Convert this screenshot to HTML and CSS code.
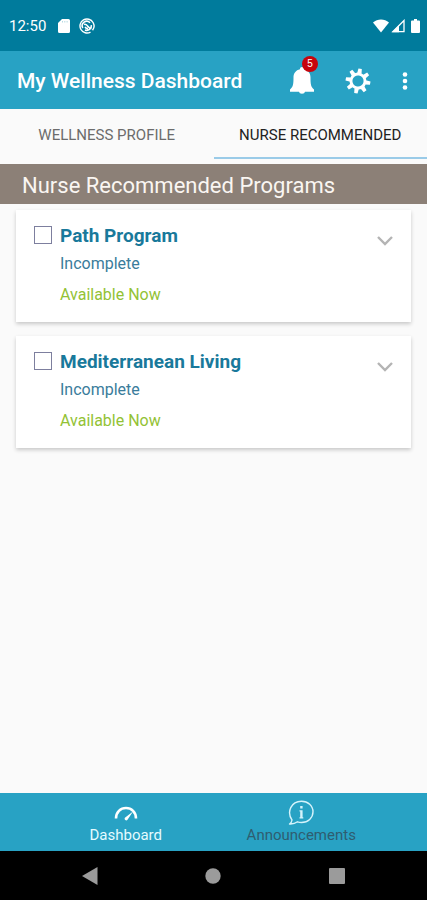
FILE: index.html
```html
<!DOCTYPE html>
<html lang="en">
<head>
<meta charset="utf-8">
<meta name="viewport" content="width=device-width, initial-scale=1">
<title>My Wellness Dashboard</title>
<link rel="stylesheet" href="styles.css">
</head>
<body>
<div class="status-bar">
  <span class="clock">12:50</span>
  <svg class="status-sd" width="12" height="14" viewBox="0 0 12 14" aria-hidden="true"><path fill="#fff" d="M4 0h6.500a1.500 1.500 0 0 1 1.500 1.500v11a1.500 1.500 0 0 1-1.500 1.500h-9A1.500 1.500 0 0 1 0 12.500V4z"/><path stroke="#b5d9e2" stroke-width="1" d="M4.500 2v1.500M6.800 2v1.500M9.100 2v1.500"/></svg>
  <svg width="16" height="16" viewBox="0 0 16 16" fill="none" stroke="#fff" aria-hidden="true"><circle cx="8" cy="8" r="7" stroke-width="1.400" stroke-dasharray="41 3" transform="rotate(60 8 8)"/><path stroke-width="1.600" d="M3.800 10A4.500 4.500 0 0 1 11 4.700M5 6.500C7 5.500 8 7 9 8.500s2 2 3.500 2M12.300 7.200A4.500 4.500 0 0 1 6 12M6 9c.8 1.200 1.500 1.600 3 1.600"/></svg>
  <div class="status-signals">
    <svg width="16" height="14" viewBox="0 0 16 14" aria-hidden="true"><path fill="#fff" d="M0 3.500C4.500-.5 11.500-.5 16 3.500L8 13.500z"/></svg>
    <svg width="14" height="14" viewBox="0 0 14 14" aria-hidden="true"><path fill="none" stroke="#fff" stroke-width="1.300" d="M1.800 12.700L13 1.500v11.200z"/><path fill="#fff" d="M1 13.300L8 6.300v7z"/></svg>
    <svg class="status-battery" width="9" height="14" viewBox="0 0 9 14" aria-hidden="true"><path fill="#fff" d="M3 0h3v1.500h2a1 1 0 0 1 1 1V13a1 1 0 0 1-1 1H1a1 1 0 0 1-1-1V2.500a1 1 0 0 1 1-1h2z"/></svg>
  </div>
</div>

<header class="app-bar">
  <h1 class="app-title">My Wellness Dashboard</h1>
  <div class="app-actions">
    <button class="icon-button" type="button" aria-label="Notifications, 5 new">
      <svg width="24" height="28" viewBox="0 0 24 28" aria-hidden="true"><path fill="#fff" d="M12 0c1.300 0 2 .9 2 2.200 4.200 1 6.500 4 6.500 8.300 0 7 .5 9.500 3.500 12v2.300H0v-2.300c3-2.500 3.500-5 3.500-12 0-4.300 2.300-7.300 6.500-8.300C10 .9 10.700 0 12 0zM8.800 24.500h6.400a3.300 3 0 0 1-6.400 0z"/></svg>
      <span class="badge">5</span>
    </button>
    <button class="icon-button" type="button" aria-label="Settings">
      <svg width="26" height="26" viewBox="-13 -13 26 26" aria-hidden="true">
        <g transform="rotate(10)">
          <circle r="7" fill="none" stroke="#fff" stroke-width="2.800"/>
          <g fill="#fff"><path id="tooth" d="M-2.200-7.500L-1.700-12.400h3.400L2.200-7.500z"/><use href="#tooth" transform="rotate(45)"/><use href="#tooth" transform="rotate(90)"/><use href="#tooth" transform="rotate(135)"/><use href="#tooth" transform="rotate(180)"/><use href="#tooth" transform="rotate(225)"/><use href="#tooth" transform="rotate(270)"/><use href="#tooth" transform="rotate(315)"/></g>
        </g>
      </svg>
    </button>
    <button class="icon-button" type="button" aria-label="More options">
      <svg width="6" height="18" viewBox="0 0 6 18" fill="#fff" aria-hidden="true"><circle cx="3" cy="2.500" r="2.300"/><circle cx="3" cy="9" r="2.300"/><circle cx="3" cy="15.500" r="2.300"/></svg>
    </button>
  </div>
</header>

<nav class="tabs" aria-label="Sections">
  <a class="tab" href="#profile">WELLNESS PROFILE</a>
  <a class="tab tab-active" href="#recommended" aria-current="page">NURSE RECOMMENDED</a>
</nav>

<main class="content">
  <h2 class="section-title">Nurse Recommended Programs</h2>
  <div class="cards">
    <article class="card">
      <input class="check" type="checkbox" id="path">
      <div class="card-text">
        <label class="card-title" for="path">Path Program</label>
        <p class="state">Incomplete</p>
        <p class="availability">Available Now</p>
      </div>
      <button class="icon-button expand" type="button" aria-label="Expand Path Program">
        <svg width="16" height="10" viewBox="0 0 16 10" aria-hidden="true"><path fill="none" stroke="#b4b4b4" stroke-width="2.400" d="M1 1l7 7 7-7"/></svg>
      </button>
    </article>
    <article class="card">
      <input class="check" type="checkbox" id="mediterranean">
      <div class="card-text">
        <label class="card-title" for="mediterranean">Mediterranean Living</label>
        <p class="state">Incomplete</p>
        <p class="availability">Available Now</p>
      </div>
      <button class="icon-button expand" type="button" aria-label="Expand Mediterranean Living">
        <svg width="16" height="10" viewBox="0 0 16 10" aria-hidden="true"><path fill="none" stroke="#b4b4b4" stroke-width="2.400" d="M1 1l7 7 7-7"/></svg>
      </button>
    </article>
  </div>
</main>

<nav class="bottom-nav" aria-label="Main">
  <a class="nav-item nav-active" href="#dashboard">
    <svg width="26" height="26" viewBox="0 0 26 26" aria-hidden="true"><path fill="none" stroke="#fff" stroke-width="2.600" d="M3 18.500C3 12 7.500 8 13 8S23 12 23 18.500"/><path fill="#fff" d="M20 11.500l-5.500 8.200a1.600 1.600 0 0 1-2.600-1.900z"/></svg>
    <span>Dashboard</span>
  </a>
  <a class="nav-item" href="#announcements">
    <svg width="26" height="26" viewBox="0 0 26 26" aria-hidden="true"><path fill="none" stroke="#d5f3fb" stroke-width="1.400" stroke-linejoin="round" d="M4 20C-1.500 12 3 1.200 13.500 1.200 20 1.200 25 5.800 25 11.800S20 22.500 13.500 22.500c-1.500 0-2.700-.2-4-.7-2.300 1.700-4.700 2.500-8 2.200 1.500-1 2.300-2.300 2.500-4z"/><path fill="#d5f3fb" d="M12.200 6h2.400v2.400h-2.400zM11.500 10.200h3.100v7h.7v1.200h-3.800v-1.200h.7v-5.800h-.7z"/></svg>
    <span>Announcements</span>
  </a>
</nav>

<div class="system-nav">
  <button class="icon-button" type="button" aria-label="Back"><svg width="16" height="18" viewBox="0 0 16 18" aria-hidden="true"><path fill="#9b9b9b" d="M0 9L15.500 0v18z"/></svg></button>
  <button class="icon-button" type="button" aria-label="Home"><svg width="16" height="16" viewBox="0 0 16 16" aria-hidden="true"><circle cx="8" cy="8" r="7.700" fill="#9b9b9b"/></svg></button>
  <button class="icon-button" type="button" aria-label="Recent apps"><svg width="16" height="16" viewBox="0 0 16 16" aria-hidden="true"><rect width="16" height="16" rx="1" fill="#9b9b9b"/></svg></button>
</div>
</body>
</html>
```
FILE: styles.css
```css
* {
  box-sizing: border-box;
}

body {
  margin: 0;
  min-height: 100vh;
  display: flex;
  flex-direction: column;
  background: #fafafa;
  font-family: Roboto, "Liberation Sans", sans-serif;
  color: #222;
}

h1, h2, p {
  margin: 0;
}

a {
  text-decoration: none;
}

svg {
  display: block;
}

.icon-button {
  position: relative;
  padding: 0;
  border: 0;
  background: none;
}

.status-bar {
  display: flex;
  align-items: center;
  padding: 16px 7px 15px 9px;
  background: #007b9c;
  color: #fff;
}

.clock {
  font-size: 15px;
  line-height: 20px;
}

.status-sd {
  margin: 0 9px 0 12px;
}

.status-signals {
  display: flex;
  align-items: center;
  gap: 2px;
  margin-left: auto;
}

.status-battery {
  margin-left: 4px;
}

.app-bar {
  display: flex;
  align-items: center;
  justify-content: space-between;
  height: 58px;
  padding: 2px 19px 0 17px;
  background: #28a2c4;
}

.app-title {
  font-size: 21px;
  line-height: 28px;
  font-weight: 500;
  color: #fff;
}

.app-actions {
  display: flex;
  align-items: center;
  gap: 31px;
}

.badge {
  position: absolute;
  top: -11px;
  right: -4px;
  width: 16px;
  border-radius: 8px;
  background: #c8040c;
  color: #fff;
  font-size: 10px;
  line-height: 16px;
  font-weight: 500;
  text-align: center;
}

.tabs {
  display: flex;
  padding-bottom: 5px;
}

.tab {
  flex: 1;
  padding: 17px 0 13px;
  border-bottom: 2px solid transparent;
  font-size: 15px;
  line-height: 18px;
  text-align: center;
  color: #6c6c6c;
}

.tab-active {
  border-color: #9acbe8;
  color: #222;
}

.content {
  flex: 1;
}

.section-title {
  padding: 8px 22px 4px;
  background: #8c8077;
  font-size: 22px;
  line-height: 28px;
  font-weight: 400;
  color: #faf6f2;
}

.cards {
  display: flex;
  flex-direction: column;
  gap: 14px;
  padding: 6px 16px;
}

.card {
  display: flex;
  align-items: flex-start;
  padding: 14px 18px 17px;
  background: #fff;
  box-shadow: 0 2px 4px rgba(0, 0, 0, 0.2);
}

.check {
  appearance: none;
  flex: none;
  width: 18px;
  height: 18px;
  margin: 2px 8px 0 0;
  border: 1px solid #7d7f9e;
  background: #fff;
}

.card-text {
  flex: 1;
}

.card-title {
  display: block;
  font-size: 19px;
  line-height: 24px;
  font-weight: 700;
  color: #19799b;
}

.state,
.availability {
  font-size: 16px;
  line-height: 20px;
}

.state {
  margin-top: 6px;
  color: #3a7c9b;
}

.availability {
  margin-top: 11px;
  color: #93c235;
}

.expand {
  margin-top: 12px;
}

.bottom-nav {
  display: flex;
  padding: 7px 38px;
  background: #28a2c4;
}

.nav-item {
  flex: 1;
  display: flex;
  flex-direction: column;
  align-items: center;
  font-size: 15px;
  line-height: 18px;
  color: #2f5d70;
}

.nav-active {
  color: #e4fbff;
}

.system-nav {
  display: flex;
  justify-content: space-around;
  align-items: center;
  height: 49px;
  padding: 0 28px;
  background: #000;
}
```
